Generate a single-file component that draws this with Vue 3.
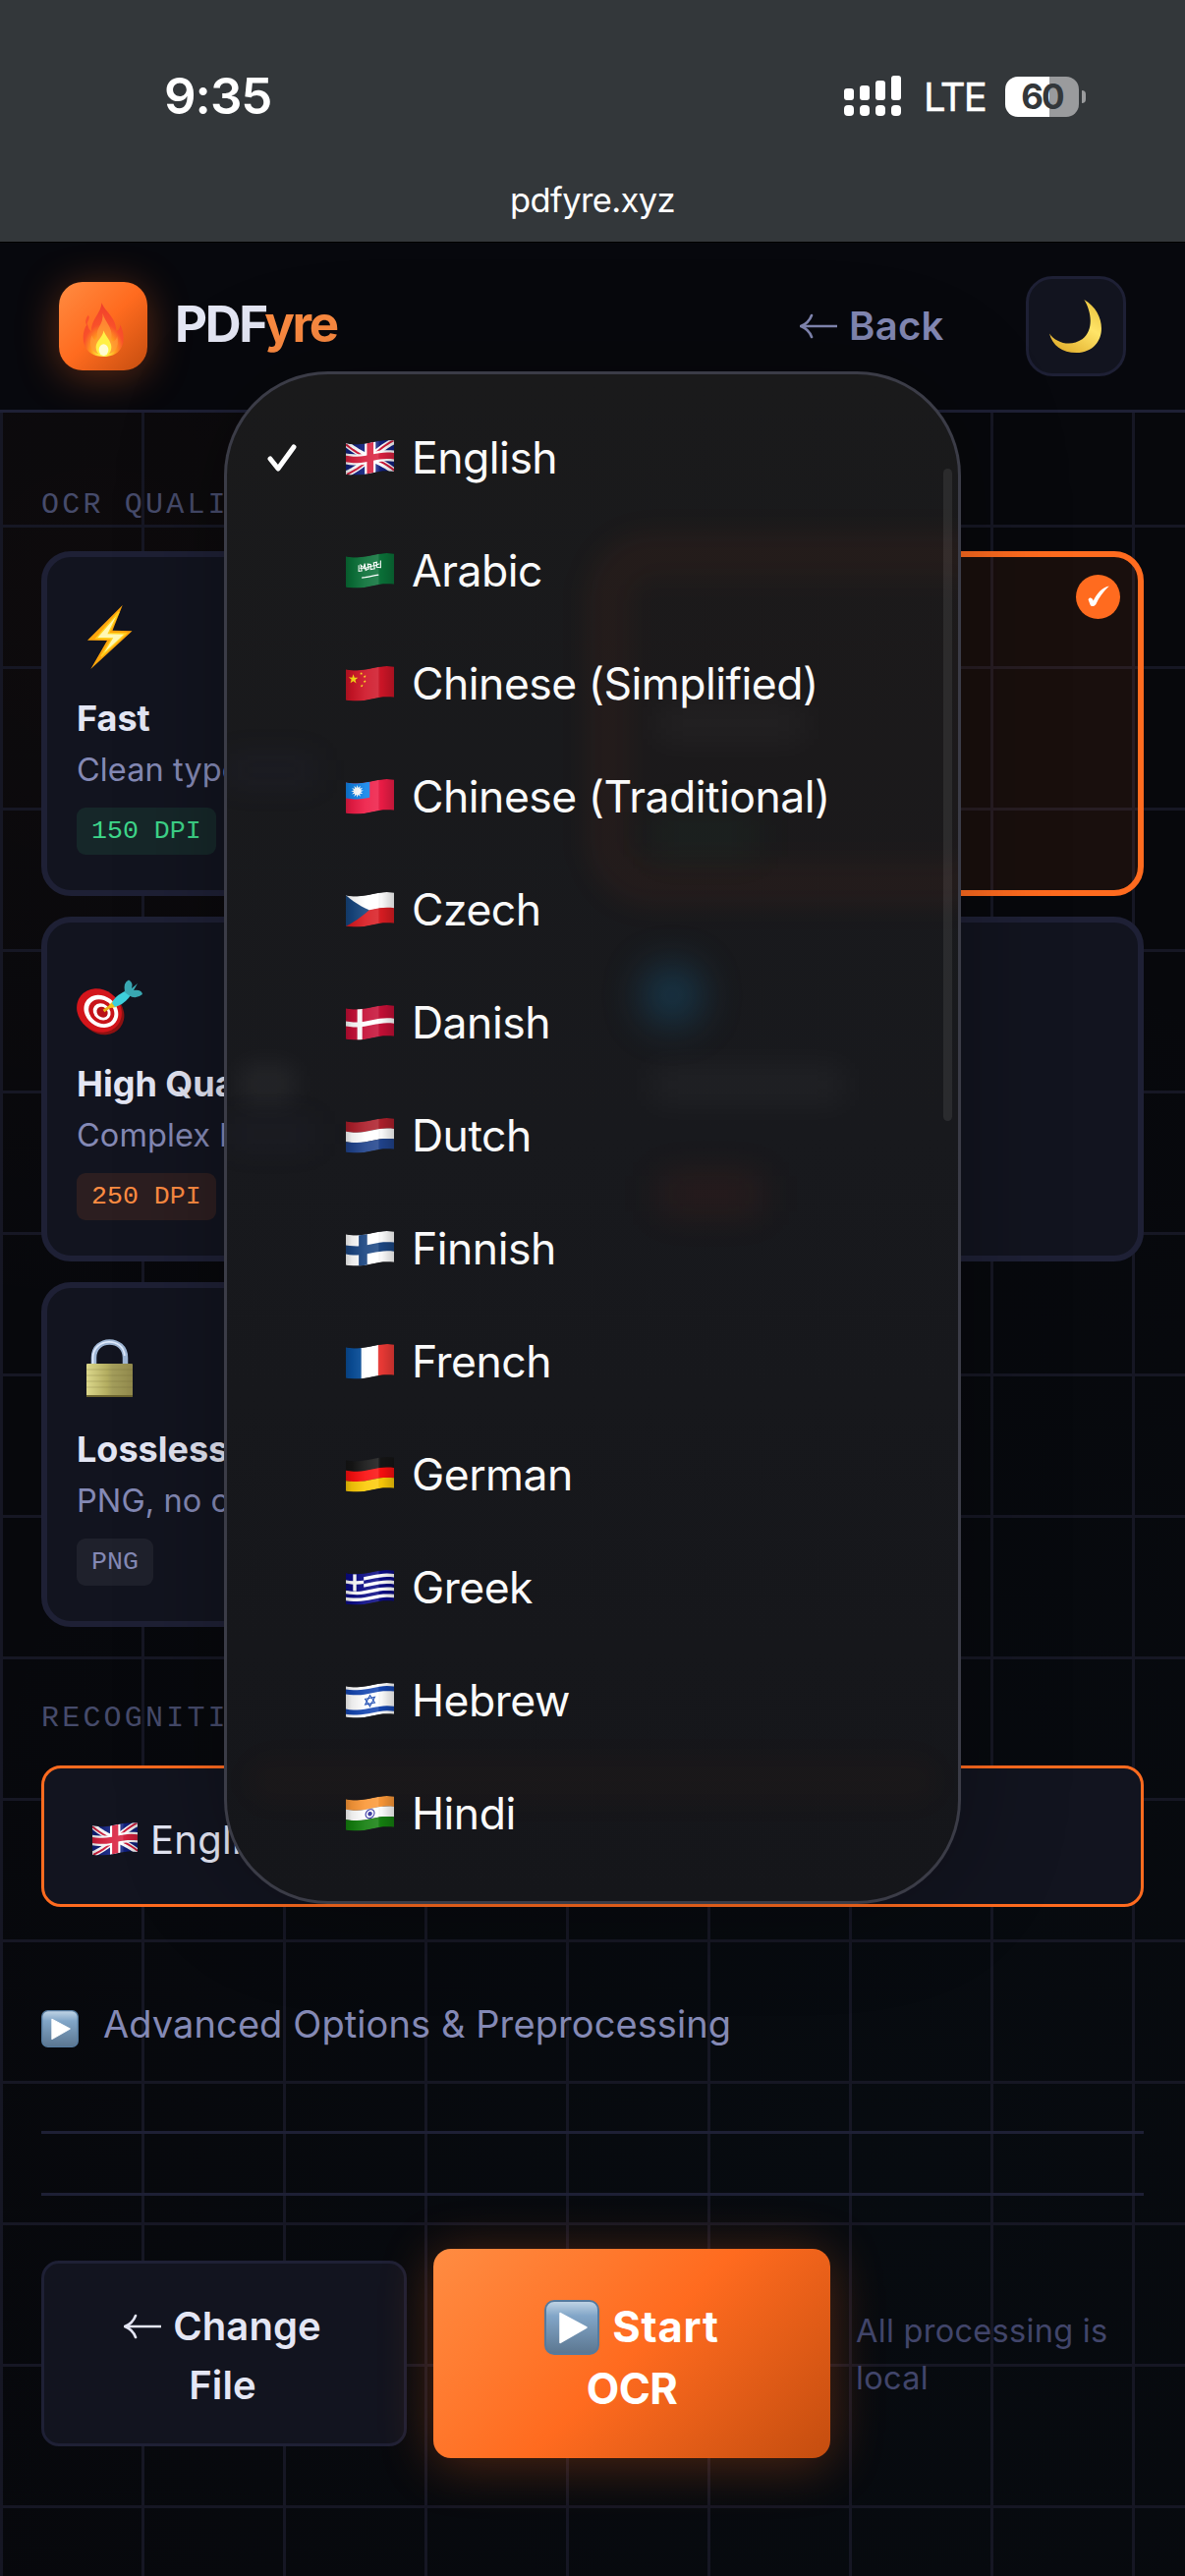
<script setup>
const FLAG_H = 31
const wave = (x) => 2.1 + 2.1 * Math.cos(((x - 10) / 32) * Math.PI)

// Maps a flat polygon on the 48 x 31 flag onto the waving surface.
function warp(points, closed = true) {
  const out = []
  const count = closed ? points.length : points.length - 1
  for (let i = 0; i < count; i++) {
    const [ax, ay] = points[i]
    const [bx, by] = points[(i + 1) % points.length]
    const steps = Math.max(1, Math.ceil(Math.abs(bx - ax) / 4))
    for (let s = 0; s <= steps; s++) {
      const x = ax + ((bx - ax) * s) / steps
      const y = ay + ((by - ay) * s) / steps
      out.push(`${x.toFixed(2)},${(y + wave(x)).toFixed(2)}`)
    }
  }
  return 'M' + out.join('L') + (closed ? 'Z' : '')
}
const fillOf = (fill, points) => ({ d: warp(points), fill, stroke: 'none', w: 0 })
const rect = (fill, x, y, w, h) => fillOf(fill, [[x, y], [x + w, y], [x + w, y + h], [x, y + h]])
const line = (stroke, w, ...points) => ({ d: warp(points, false), fill: 'none', stroke, w })
const star = (fill, cx, cy, r, tips = 5, inner = 0.4) => {
  const pts = []
  for (let i = 0; i < tips * 2; i++) {
    const a = (i * Math.PI) / tips - Math.PI / 2
    const k = i % 2 ? r * inner : r
    pts.push([cx + k * Math.cos(a), cy + k * Math.sin(a)])
  }
  return fillOf(fill, pts)
}
const ring = (stroke, w, cx, cy, r) => {
  const pts = []
  for (let i = 0; i < 20; i++) pts.push([cx + r * Math.cos((i * Math.PI) / 10), cy + r * Math.sin((i * Math.PI) / 10)])
  return { d: warp(pts), fill: 'none', stroke, w }
}
const triangle = (stroke, cx, cy, r, dir) => ({
  d: warp([[cx, cy - r * dir], [cx + r * 0.87, cy + r * 0.5 * dir], [cx - r * 0.87, cy + r * 0.5 * dir]]),
  fill: 'none', stroke, w: 1.1,
})
const thirds = (a, b, c) => [rect(a, 0, 0, 49, 10.4), rect(b, 0, 10.3, 49, 10.4), rect(c, 0, 20.6, 49, 10.4)]

const flags = {
  gb: [
    rect('#10207e', 0, 0, 49, FLAG_H),
    line('#fff', 6.4, [0, 0], [49, 31]), line('#fff', 6.4, [49, 0], [0, 31]),
    line('#d21c3c', 2, [0, 1], [22, 15]), line('#d21c3c', 2, [49, 30], [27, 16]),
    line('#d21c3c', 2, [48, 0], [26, 14]), line('#d21c3c', 2, [1, 31], [22, 18]),
    rect('#fff', 19, 0, 11, 31), rect('#fff', 0, 10, 49, 11),
    rect('#d9213f', 21.2, 0, 6.6, 31), rect('#d9213f', 0, 12.3, 49, 6.4),
  ],
  sa: [
    rect('#0a7138', 0, 0, 49, FLAG_H),
    line('#fff', 1.1, [13, 8], [13, 14], [16, 14], [15, 8], [18, 11], [19, 7], [20, 14], [23, 13], [22, 8], [25, 9], [25, 14], [29, 14], [28, 8], [31, 8], [31, 13], [35, 14], [35, 7]),
    line('#fff', 1, [14, 11], [19, 12], [24, 11], [30, 11], [34, 10]),
    line('#fff', 1.3, [16, 21], [33, 21]),
  ],
  cn: [
    rect('#cf1527', 0, 0, 49, FLAG_H), star('#ffe014', 7.5, 9, 5),
    star('#ffe014', 15.5, 3.5, 1.6), star('#ffe014', 19, 7, 1.6), star('#ffe014', 19, 12, 1.6), star('#ffe014', 16, 16, 1.6),
  ],
  tw: [rect('#ee1c46', 0, 0, 49, FLAG_H), rect('#1285ea', 0, 0, 24, 16), star('#fff', 11.5, 8, 6.3, 12, 0.55)],
  cz: [rect('#fff', 0, 0, 49, 16), rect('#d91c22', 0, 15.5, 49, 15.5), fillOf('#16467f', [[0, 0], [23.5, 15.5], [0, 31]])],
  dk: [rect('#c50f36', 0, 0, 49, FLAG_H), rect('#fff', 11.5, 0, 5, 31), rect('#fff', 0, 13, 49, 5)],
  nl: thirds('#ad1f2b', '#fff', '#20438c'),
  fi: [rect('#fff', 0, 0, 49, FLAG_H), rect('#1b4682', 13, 0, 8.5, 31), rect('#1b4682', 0, 11, 49, 9)],
  fr: [rect('#0a509c', 0, 0, 16, 31), rect('#fff', 15.5, 0, 17.5, 31), rect('#ed3a36', 32.5, 0, 16.5, 31)],
  de: thirds('#151515', '#fb0f0f', '#fccb08'),
  gr: [
    rect('#0b0b85', 0, 0, 49, FLAG_H),
    ...[1, 3, 5, 7].map((n) => rect('#fff', 0, n * 3.44, 49, 3.44)),
    rect('#0b0b85', 0, 0, 18, 17.2), rect('#fff', 7.2, 0, 3.4, 17.2), rect('#fff', 0, 6.9, 18, 3.4),
  ],
  il: [
    rect('#fff', 0, 0, 49, FLAG_H), rect('#1546b0', 0, 3, 49, 5), rect('#1546b0', 0, 23, 49, 5),
    triangle('#1546b0', 24.3, 15.5, 5.6, 1), triangle('#1546b0', 24.3, 15.5, 5.6, -1),
  ],
  in: [...thirds('#fb9838', '#fff', '#14800f'), ring('#2a2a9c', 1.1, 24.3, 15.5, 4.4), ring('#2a2a9c', 2, 24.3, 15.5, 1.2)],
}
const outline = warp([[0, 0], [48.5, 0], [48.5, FLAG_H], [0, FLAG_H]])

const languages = [
  { code: 'gb', name: 'English', on: true },
  { code: 'sa', name: 'Arabic' },
  { code: 'cn', name: 'Chinese (Simplified)' },
  { code: 'tw', name: 'Chinese (Traditional)' },
  { code: 'cz', name: 'Czech' },
  { code: 'dk', name: 'Danish' },
  { code: 'nl', name: 'Dutch' },
  { code: 'fi', name: 'Finnish' },
  { code: 'fr', name: 'French' },
  { code: 'de', name: 'German' },
  { code: 'gr', name: 'Greek' },
  { code: 'il', name: 'Hebrew' },
  { code: 'in', name: 'Hindi' },
]
</script>

<template>
  <div class="screen">
    <svg class="defs" width="0" height="0" aria-hidden="true">
      <defs>
        <clipPath id="flag-clip"><path :d="outline" /></clipPath>
        <linearGradient id="flag-shade" x1="0" x2="1" y1="0" y2="0">
          <stop offset="0" stop-color="#000" stop-opacity=".2" />
          <stop offset=".12" stop-color="#000" stop-opacity=".08" />
          <stop offset=".4" stop-color="#fff" stop-opacity=".08" />
          <stop offset=".66" stop-color="#fff" stop-opacity=".13" />
          <stop offset=".72" stop-color="#000" stop-opacity=".02" />
          <stop offset="1" stop-color="#000" stop-opacity=".2" />
        </linearGradient>
        <linearGradient id="play-bg" x1="0" x2="0" y1="0" y2="1">
          <stop offset="0" stop-color="#c3d6e6" />
          <stop offset=".28" stop-color="#82a6c8" />
          <stop offset="1" stop-color="#5b7690" />
        </linearGradient>
        <symbol id="play" viewBox="0 0 56 56">
          <rect x="1" y="1" width="54" height="54" rx="9" fill="url(#play-bg)" stroke="#557a9e" stroke-width="2" />
          <path d="M16 13.5 43 28 16 43.5Z" fill="#fff" stroke="#fff" stroke-width="1.5" stroke-linejoin="round" />
        </symbol>
      </defs>
    </svg>

    <div class="status">
      <div class="status-row">
        <span class="time">9:35</span>
        <div class="status-right">
          <svg class="signal" viewBox="0 0 58 42" fill="#fff">
            <rect x="0" y="13" width="10" height="12" rx="3" /><rect x="16" y="10" width="10" height="15" rx="3" />
            <rect x="32" y="5" width="10" height="20" rx="3" /><rect x="48" y="0" width="10" height="25" rx="3" />
            <rect v-for="x in [0, 16, 32, 48]" :key="x" :x="x" y="30" width="10" height="11" rx="4" />
          </svg>
          <span class="lte">LTE</span>
          <div class="battery"><span>60</span></div>
          <i class="nub"></i>
        </div>
      </div>
      <div class="url">pdfyre.xyz</div>
    </div>

    <header class="header">
      <div class="logo">
        <svg viewBox="0 0 46 58">
          <defs>
            <radialGradient id="fire" cx=".5" cy=".9" r=".85">
              <stop offset="0" stop-color="#fffbd0" /><stop offset=".15" stop-color="#ffe93c" />
              <stop offset=".36" stop-color="#ff9a1e" /><stop offset=".6" stop-color="#f9502a" /><stop offset="1" stop-color="#f0402c" />
            </radialGradient>
          </defs>
          <path d="M21 1C23 9 37 17 36 31C40 29 40 26 40 24C46 34 47 57 23 57C-2 57-1 32 6 23C7 27 8 29 10 31C10 18 20 13 21 1Z" fill="url(#fire)" />
          <path d="M7 14C3 19 4 23 6 25C5 20 10 18 7 14Z" fill="#f9502a" />
          <path d="M22 12C24 21 33 27 31 38C30 43 36 42 37 36C40 48 34 55 23 55C9 55 7 43 11 35C12 40 16 42 16 36C15 27 23 24 22 12Z" fill="#ff9a35" opacity=".75" />
          <path d="M23 30C25 36 31 41 31 47C31 53 28 56 23 56C18 56 15 53 15 47C15 41 22 37 23 30Z" fill="#fff045" />
          <ellipse cx="23" cy="50" rx="5" ry="6" fill="#fffde0" opacity=".9" />
        </svg>
      </div>
      <div class="brand">PDF<b>yre</b></div>
      <div class="back">
        <svg viewBox="0 0 38 28"><path d="M38 14H2M12 3Q9 11 1 14Q9 17 12 25" /></svg>
        <span>Back</span>
      </div>
      <div class="theme">
        <svg viewBox="0 0 58 58">
          <defs><linearGradient id="moon" x1="1" y1="0" x2=".4" y2="1"><stop offset="0" stop-color="#e6bd35" /><stop offset=".5" stop-color="#ffe468" /><stop offset="1" stop-color="#e5b534" /></linearGradient></defs>
          <path d="M37 1C63 16 61 55 29 56C14 56 4 48 1 36C8 46 23 50 35 42C47 33 45 14 37 1Z" fill="url(#moon)" />
        </svg>
      </div>
    </header>

    <main class="main">
      <div class="label">OCR QUALITY</div>
      <div class="cards">
        <div class="card">
          <svg class="icon" viewBox="0 0 72 84">
            <path d="M46.7 8 11 43.8 31 44 14.3 73 56.5 34.3 36.5 33.8Z" fill="#ffa60c" />
            <path d="M43 15 20 41.5 36 42 25 60 50 37 32.5 36.5Z" fill="#fff8b4" stroke="#ffd21e" stroke-width="1.4" />
          </svg>
          <div class="title">Fast</div>
          <div class="desc">Clean typed docs</div>
          <div class="chip green">150 DPI</div>
        </div>
        <div class="card selected"><span class="tick"><svg viewBox="0 0 20 20"><path d="M.5 13C1.5 10.5 4 11 5.200 14C8.500 7.500 13 2 19.800.5C14.500 5.500 10.500 11 7.500 17.500C5.500 20 2.500 19.500 2.200 17.500Z" fill="#fff" /></svg></span></div>
        <div class="card">
          <svg class="icon" viewBox="0 0 72 84">
            <ellipse cx="25.500" cy="51" rx="24" ry="21" transform="rotate(38 25.500 51)" fill="#8e1212" />
            <g transform="rotate(38 23 48.500)">
              <ellipse cx="23" cy="48.500" rx="24" ry="21" fill="#d3151b" />
              <ellipse cx="25" cy="48" rx="18.500" ry="15.500" fill="#fff" />
              <ellipse cx="25.500" cy="48" rx="14" ry="11.500" fill="#c8141a" />
              <ellipse cx="26" cy="48" rx="9.500" ry="8" fill="#fff" />
              <ellipse cx="26.500" cy="48" rx="6" ry="5" fill="#b81218" />
            </g>
            <path d="M27.500 49 39 41" stroke="#e9b31b" stroke-width="3" />
            <path d="M33 43 38 38 41 45 34 46Z" fill="#f3c21c" />
            <path d="M36 41Q38 34 51 28L55 33Q49 42 39 45Z" fill="#3fd0dd" />
            <path d="M49 30Q47 20 53 17.500Q58 20 56 26L62 21L58 28Q66 27 67 32Q60 38 53 33Z" fill="#3aa9b4" />
          </svg>
          <div class="title">High Quality</div>
          <div class="desc">Complex layouts</div>
          <div class="chip orange">250 DPI</div>
        </div>
        <div class="card"></div>
        <div class="card">
          <svg class="icon" viewBox="0 0 72 84">
            <defs><linearGradient id="brass" x1="0" x2="1" y1="0" y2="0"><stop offset="0" stop-color="#dcd88c" /><stop offset=".45" stop-color="#b3ad60" /><stop offset=".55" stop-color="#a49e5c" /><stop offset="1" stop-color="#928a4c" /></linearGradient></defs>
            <path d="M17.500 38V30C17.500 8.500 49.500 8.500 49.500 30V38" fill="none" stroke="#9fb6d4" stroke-width="5.500" />
            <path d="M16.500 38V30C17 9 48 8.500 48.800 28" fill="none" stroke="#dfeafc" stroke-width="1.800" />
            <rect x="10" y="36" width="47" height="33.500" rx="1" fill="url(#brass)" />
            <path d="M10 42H57M10 48H57M10 54H57M10 60H57" stroke="#6d6530" stroke-opacity=".25" />
            <path d="M10 69H57" stroke="#6d6530" stroke-width="2" />
          </svg>
          <div class="title">Lossless</div>
          <div class="desc">PNG, no compress</div>
          <div class="chip grey">PNG</div>
        </div>
      </div>

      <div class="label second">RECOGNITION</div>
      <div class="select">
        <svg class="flag" viewBox="0 0 48.500 35.500">
          <g clip-path="url(#flag-clip)">
            <path v-for="(s, i) in flags.gb" :key="i" :d="s.d" :fill="s.fill" :stroke="s.stroke" :stroke-width="s.w" />
            <rect width="49" height="36" fill="url(#flag-shade)" />
          </g>
        </svg>
        <span>English</span>
      </div>

      <div class="advanced"><svg><use href="#play" /></svg><span>Advanced Options &amp; Preprocessing</span></div>
      <div class="rules"></div>

      <div class="actions">
        <div class="btn change">
          <div><svg viewBox="0 0 38 28"><path d="M38 14H2M12 3Q9 11 1 14Q9 17 12 25" /></svg>Change</div>
          <div class="file">File</div>
        </div>
        <div class="btn start">
          <div><svg><use href="#play" /></svg>Start</div>
          <div class="ocr">OCR</div>
        </div>
        <div class="note">All processing is<br>local</div>
      </div>
    </main>

    <div class="popover">
      <div class="haze">
        <i class="h-card"></i><i class="h-t1"></i><i class="h-green"></i><i class="h-blue"></i>
        <i class="h-t2"></i><i class="h-red"></i><i class="h-t3"></i><i class="h-t4"></i><i class="h-t5"></i><i class="h-sel"></i>
      </div>
      <div v-for="l in languages" :key="l.code" class="row">
        <svg class="check" viewBox="0 0 30 28"><path v-if="l.on" d="M3 15 11 25 27 3" /></svg>
        <svg class="flag" viewBox="0 0 48.500 35.500">
          <g clip-path="url(#flag-clip)">
            <path v-for="(s, i) in flags[l.code]" :key="i" :d="s.d" :fill="s.fill" :stroke="s.stroke" :stroke-width="s.w" />
            <rect width="49" height="36" fill="url(#flag-shade)" />
          </g>
        </svg>
        <span>{{ l.name }}</span>
      </div>
      <div class="scrollbar"></div>
    </div>
  </div>
</template>

<style>
body { background: #07080d; }
</style>

<style scoped>
.screen { position: relative; width: 1206px; height: 2622px; overflow: hidden; display: flex; flex-direction: column; background: #07080c; font-family: Inter, "Liberation Sans", sans-serif; white-space: nowrap; }
.screen * { box-sizing: border-box; }
.defs { position: absolute; }
svg { display: block; flex: none; }

.status { flex: none; height: 246px; background: #33373a; color: #fff; }
.status-row { display: flex; justify-content: space-between; padding: 77px 101px 0 167px; height: 125px; }
.time { font-size: 51px; font-weight: 600; line-height: 42px; letter-spacing: -1px; }
.status-right { display: flex; height: 42px; align-items: center; }
.signal { width: 58px; height: 42px; }
.lte { margin-left: 23px; width: 63px; font-size: 40px; font-weight: 400; line-height: 42px; letter-spacing: -1.9px; padding-top: 1px; -webkit-text-stroke: .4px #fff; }
.battery { margin-left: 20px; width: 75px; height: 41px; border-radius: 13px; background: linear-gradient(90deg, #fff 60%, #9a9b9d 60%); text-align: center; }
.battery span { font-size: 35px; font-weight: 700; line-height: 41px; color: #33373a; letter-spacing: -2px; }
.nub { width: 4px; height: 13px; margin-left: 3px; border-radius: 0 4px 4px 0; background: #9a9b9d; }
.url { margin-top: 55px; height: 48px; line-height: 48px; font-size: 34.500px; text-align: center; letter-spacing: -.6px; }

.header { flex: none; height: 174px; display: flex; align-items: center; padding: 0 60px; border-top: 1px solid #000; border-bottom: 3px solid #1e2035; background: #07080d; }
.logo { width: 90px; height: 90px; border-radius: 24px; background: linear-gradient(135deg, #ff8c42, #ff6b1f 50%, #c44d0f); box-shadow: 0 6px 42px rgba(255, 107, 31, .35); display: flex; justify-content: center; padding-top: 20px; }
.logo svg { width: 45px; height: 57px; }
.brand { margin-left: 28px; width: 480px; font-size: 51px; font-weight: 700; line-height: 60px; color: #e4e6f4; letter-spacing: -2.300px; padding-bottom: 4px; }
.brand b { font-weight: 700; color: #ff8c42; }
.back { margin-left: 156px; width: 150px; display: flex; align-items: center; color: #8489b5; font-size: 40px; font-weight: 600; letter-spacing: .300px; line-height: 48px; }
.back svg, .change svg { width: 38px; height: 28px; fill: none; stroke: currentColor; stroke-width: 2.6; stroke-linecap: round; }
.back span { margin-left: 12px; }
.theme { margin-left: 80px; flex: none; width: 102px; height: 102px; border: 3px solid #1e2035; border-radius: 27px; background: #12141f; display: flex; align-items: center; justify-content: center; }
.theme svg { width: 57px; height: 57px; }

.main { flex: 1; padding: 79px 42px 0;
  background:
    linear-gradient(90deg, #161724 3px, transparent 3px) 0 0 / 144px 144px,
    linear-gradient(#161724 3px, transparent 3px) 0 114px / 144px 144px,
    radial-gradient(ellipse 700px 750px at 100px 200px, rgba(255, 107, 31, .028), transparent),
    radial-gradient(ellipse 1000px 1300px at 900px 1800px, rgba(0, 70, 90, .05), transparent),
    #07080c; }
.label { height: 30px; line-height: 30px; font: 400 30px/30px "Liberation Mono", monospace; letter-spacing: 3.200px; color: #464b6b; }
.label.second { margin-top: 78px; }
.cards { margin-top: 32px; display: grid; grid-template-columns: 1fr 1fr; gap: 21px; }
.card { height: 351px; border: 6px solid #1e2035; border-radius: 30px; background: #12141f; padding: 41px 30px 0; overflow: hidden; position: relative; }
.card.selected { border-color: #ff6b1f; background: rgba(255, 107, 31, .075); }
.tick { position: absolute; top: 18px; right: 18px; width: 45px; height: 45px; border-radius: 50%; background: #ff6b1f; display: flex; align-items: center; justify-content: center; }
.tick svg { width: 22px; height: 22px; margin-bottom: 2px; }
.icon { width: 72px; height: 84px; }
.title { margin-top: 16px; height: 46px; line-height: 46px; font-size: 36px; font-weight: 700; color: #e4e6f4; letter-spacing: 0; }
.desc { margin-top: 6px; height: 48px; line-height: 48px; font-size: 32.500px; color: #8489b5; letter-spacing: .100px; }
.chip { margin-top: 14px; width: max-content; height: 48px; padding: 0 15px 0 15px; border-radius: 9px; font: 400 26.6px/49px "Liberation Mono", monospace; }
.green { color: #3ed68a; background: rgba(62, 214, 138, .1); }
.orange { color: #ff8c42; background: rgba(255, 120, 50, .11); }
.grey { color: #8489b5; background: rgba(255, 255, 255, .06); }

.select { margin-top: 33px; height: 144px; border: 3px solid #ff6b1f; border-radius: 20px; background: #12141f; display: flex; align-items: center; padding: 6px 0 0 49px; color: #e4e6f4; font-size: 40px; }
.select .flag { width: 46px; height: 34px; }
.select span { margin-left: 13px; letter-spacing: .3px; }

.advanced { margin-top: 89px; height: 60px; display: flex; align-items: center; color: #8489b5; font-size: 38px; letter-spacing: .090px; }
.advanced svg { width: 38px; height: 38px; margin-top: 9px; }
.advanced span { margin-left: 25px; }
.rules { margin-top: 79px; height: 66px; border: solid #1e2035; border-width: 3px 0; }

.actions { margin-top: 54px; height: 213px; display: flex; align-items: center; }
.btn { border-radius: 18px; display: flex; flex-direction: column; align-items: center; justify-content: center; }
.btn div { display: flex; align-items: center; }
.change { width: 372px; height: 189px; border: 3px solid #1e2035; background: #12141f; color: #e4e6f4; font-size: 40px; font-weight: 600; line-height: 60px; letter-spacing: .100px; padding: 4px 3px 0 0; }
.change svg { margin-right: 12px; }
.start { margin-left: 27px; width: 404px; height: 213px; padding-top: 9px; background: linear-gradient(135deg, #ff8c42, #ff6b1f 50%, #c44d0f); box-shadow: 0 6px 54px rgba(255, 107, 31, .3); color: #fff; font-size: 43.500px; font-weight: 700; line-height: 63px; letter-spacing: .8px; }
.start svg { width: 56px; height: 56px; margin-right: 13px; }
.start .ocr { letter-spacing: -.600px; }
.note { margin-left: 26px; padding-top: 2px; font-size: 32.500px; line-height: 48px; color: #41456a; letter-spacing: .300px; }

.popover { position: absolute; left: 228px; top: 378px; width: 750px; height: 1560px; border: 3px solid rgba(125, 125, 145, .4); border-radius: 106px; background: linear-gradient(#1a1a1b, #18191d 50%, #15161a) padding-box, #101116 border-box; box-shadow: 0 0 110px rgba(0, 0, 0, .28); padding-top: 27.500px; overflow: hidden; color: #fafafa; }
.row { position: relative; height: 115px; display: flex; align-items: center; font-size: 44.500px; padding-left: 41px; }
.check { width: 30px; height: 28px; fill: none; stroke: #fff; stroke-width: 5; stroke-linecap: round; stroke-linejoin: round; }
.row .flag { width: 49px; height: 36px; margin-left: 50px; }
.row span { margin-left: 18px; letter-spacing: -.500px; }
.scrollbar { position: absolute; right: 6px; top: 96px; width: 9px; height: 664px; border-radius: 5px; background: rgba(255, 255, 255, .08); }
.haze i { position: absolute; display: block; }
.h-card { left: 370px; top: 165px; width: 430px; height: 372px; border: 34px solid rgba(255, 90, 20, .055); border-radius: 60px; background: rgba(255, 80, 20, .012); filter: blur(16px); }
.h-t1 { left: 435px; top: 338px; width: 155px; height: 34px; background: rgba(255, 255, 255, .04); filter: blur(18px); }
.h-green { left: 432px; top: 445px; width: 110px; height: 46px; background: rgba(20, 200, 120, .045); filter: blur(18px); }
.h-blue { left: 423px; top: 602px; width: 60px; height: 60px; border-radius: 50%; background: rgba(20, 110, 160, .36); filter: blur(20px); }
.h-t2 { left: 430px; top: 706px; width: 200px; height: 34px; background: rgba(255, 255, 255, .045); filter: blur(18px); }
.h-red { left: 440px; top: 815px; width: 105px; height: 38px; background: rgba(255, 60, 10, .08); filter: blur(19px); }
.h-t3 { left: 14px; top: 704px; width: 54px; height: 36px; background: rgba(255, 255, 255, .06); filter: blur(14px); }
.h-t4 { left: 0; top: 390px; width: 90px; height: 26px; background: rgba(80, 80, 150, .08); filter: blur(16px); }
.h-t5 { left: 0; top: 760px; width: 90px; height: 26px; background: rgba(80, 80, 150, .06); filter: blur(16px); }
.h-sel { left: 20px; top: 1408px; width: 704px; height: 46px; border-radius: 23px; background: rgba(255, 90, 20, .025); filter: blur(14px); }
</style>
